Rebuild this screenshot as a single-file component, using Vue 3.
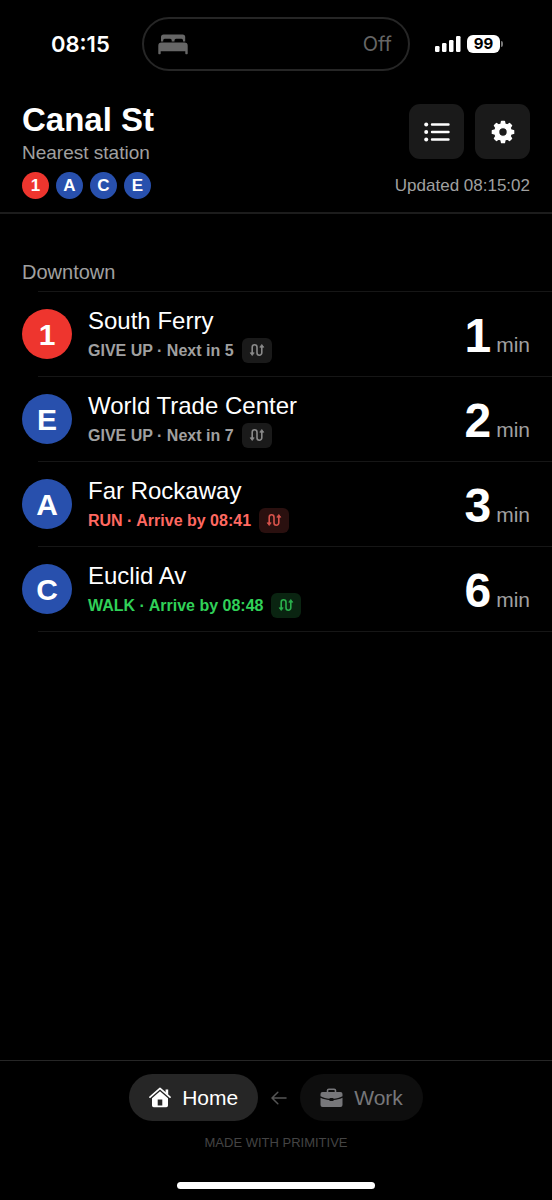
<template>
  <div class="app">
    <div class="status-bar">
      <span class="status-time">08:15</span>
      <div class="island">
        <svg class="bed-icon" viewBox="0 0 30 21" aria-hidden="true">
          <path d="M3 7.5V3a2.600 2.600 0 0 1 2.600-2.600h19A2.600 2.600 0 0 1 27.200 3v4.500h-2.200V6.200a1.500 1.500 0 0 0-1.500-1.500h-5.500a1.500 1.500 0 0 0-1.500 1.500v1.300h-2.800V6.200a1.500 1.500 0 0 0-1.500-1.500H6.700a1.500 1.500 0 0 0-1.500 1.500v1.300z" />
          <path d="M3.500 8.600h23a3.200 3.200 0 0 1 3.200 3.200V19.500a.7.7 0 0 1-.7.700h-1a.7.7 0 0 1-.7-.7v-2.200H2.700v2.200a.7.7 0 0 1-.7.700H1a.7.7 0 0 1-.7-.7v-7.700a3.200 3.200 0 0 1 3.200-3.200z" />
        </svg>
        <span>Off</span>
      </div>
      <div class="status-right">
        <svg class="signal-icon" viewBox="0 0 26 18" aria-hidden="true">
          <rect x="0" y="11" width="4.500" height="6" rx="1.200" />
          <rect x="7" y="8" width="4.500" height="9" rx="1.200" />
          <rect x="14" y="5" width="4.500" height="12" rx="1.200" />
          <rect x="21" y="1" width="4.500" height="16" rx="1.200" />
        </svg>
        <span class="battery">99</span>
        <span class="battery-tip"></span>
      </div>
    </div>

    <header class="header">
      <div>
        <h1 class="station">Canal St</h1>
        <p class="station-hint">Nearest station</p>
        <div class="lines">
          <span v-for="line in lines" :key="line" class="bullet small" :class="bulletColor(line)">{{ line }}</span>
        </div>
      </div>
      <div class="header-side">
        <div class="actions">
          <button class="icon-btn" type="button" aria-label="Stations">
            <svg width="26" height="20" viewBox="0 0 26 20" aria-hidden="true">
              <g fill="#fff">
                <circle cx="2.200" cy="2.500" r="2" />
                <circle cx="2.200" cy="10" r="2" />
                <circle cx="2.200" cy="17.500" r="2" />
              </g>
              <path d="M8 2.500h16.500M8 10h16.500M8 17.500h16.500" stroke="#fff" stroke-width="2.400" stroke-linecap="round" />
            </svg>
          </button>
          <button class="icon-btn" type="button" aria-label="Settings">
            <svg width="24" height="24" viewBox="-12 -12 24 24" aria-hidden="true">
              <path :d="gearPath" fill="#fff" fill-rule="evenodd" stroke="#fff" stroke-width="1.400" stroke-linejoin="round" />
            </svg>
          </button>
        </div>
        <span class="updated">Updated 08:15:02</span>
      </div>
    </header>

    <main class="board">
      <h2 class="direction">Downtown</h2>
      <ul class="trains">
        <li v-for="train in trains" :key="train.line" class="train">
          <span class="bullet" :class="bulletColor(train.line)">{{ train.line }}</span>
          <div class="info">
            <div class="dest">{{ train.dest }}</div>
            <div class="advice" :class="train.mood">
              <span>{{ train.advice }}</span>
              <button class="route-btn" type="button" :aria-label="'Route to ' + train.dest">
                <svg width="16" height="14" viewBox="0 0 16 14" aria-hidden="true">
                  <path
                    d="M3.200 10V4.200a2.400 2.400 0 0 1 4.800 0v5.600a2.400 2.400 0 0 0 4.800 0V4"
                    fill="none"
                    stroke="currentColor"
                    stroke-width="1.600"
                  />
                  <path
                    d="M1.200 9.800h4l-2 2.700zM10.800 4.200h4l-2-2.700z"
                    fill="currentColor"
                    stroke="currentColor"
                    stroke-width=".8"
                    stroke-linejoin="round"
                  />
                </svg>
              </button>
            </div>
          </div>
          <div class="eta">
            <span class="eta-num">{{ train.minutes }}</span>
            <span class="eta-unit">min</span>
          </div>
        </li>
      </ul>
    </main>

    <footer class="footer">
      <div class="places">
        <button class="place active" type="button">
          <svg width="22" height="21" viewBox="0 0 22 21" aria-hidden="true">
            <path d="M1 10.200L11 1.400l10 8.800" fill="none" stroke="currentColor" stroke-width="1.700" stroke-linecap="round" stroke-linejoin="round" />
            <path d="M16.600 2.600h2.600v5.200l-2.600-2.300z" fill="currentColor" />
            <path
              d="M11 4.300l8 7V18.500a1.700 1.700 0 0 1-1.700 1.700H4.700A1.700 1.700 0 0 1 3 18.500v-7.200zM8.700 12.400v6h4.600v-6z"
              fill="currentColor"
              fill-rule="evenodd"
            />
          </svg>
          <span>Home</span>
        </button>
        <svg class="arrow" width="16" height="14" viewBox="0 0 16 14" aria-hidden="true">
          <path d="M15 7H1.200M6.800 1.200L1 7l5.800 5.800" fill="none" stroke="currentColor" stroke-width="1.500" stroke-linecap="round" stroke-linejoin="round" />
        </svg>
        <button class="place" type="button">
          <svg width="23" height="20" viewBox="0 0 23 20" aria-hidden="true">
            <path d="M7.500 4.500V2.600A1.400 1.400 0 0 1 8.900 1.200h5.200a1.400 1.400 0 0 1 1.400 1.400v1.900" fill="none" stroke="currentColor" stroke-width="1.600" />
            <path d="M2.500 4h18a2 2 0 0 1 2 2v2.200c-3 1.500-6 2.200-8.700 2.500a1.500 1.500 0 0 0-1.300-.7h-2a1.500 1.500 0 0 0-1.300.7C6.500 10.400 3.500 9.700.5 8.200V6a2 2 0 0 1 2-2z" fill="currentColor" />
            <path d="M.5 9.700c3 1.400 6 2.100 8.600 2.300a1.500 1.500 0 0 0 1.400 1h2a1.500 1.500 0 0 0 1.400-1c2.600-.2 5.600-.9 8.600-2.300V17a2 2 0 0 1-2 2h-18a2 2 0 0 1-2-2z" fill="currentColor" />
          </svg>
          <span>Work</span>
        </button>
      </div>
      <p class="credit">MADE WITH PRIMITIVE</p>
      <div class="home-indicator"></div>
    </footer>
  </div>
</template>

<script setup>
const lines = ['1', 'A', 'C', 'E']

const trains = [
  { line: '1', dest: 'South Ferry', advice: 'GIVE UP · Next in 5', mood: 'missed', minutes: 1 },
  { line: 'E', dest: 'World Trade Center', advice: 'GIVE UP · Next in 7', mood: 'missed', minutes: 2 },
  { line: 'A', dest: 'Far Rockaway', advice: 'RUN · Arrive by 08:41', mood: 'run', minutes: 3 },
  { line: 'C', dest: 'Euclid Av', advice: 'WALK · Arrive by 08:48', mood: 'walk', minutes: 6 },
]

const bulletColor = (line) => (line === '1' ? 'red' : 'blue')

// eight-tooth gear with a round hole
const makeGear = (teeth, outer, inner, hole) => {
  const points = []
  const step = (Math.PI * 2) / teeth
  for (let i = 0; i < teeth; i++) {
    const mid = i * step
    const corners = [[-0.31, inner], [-0.17, outer], [0.17, outer], [0.31, inner]]
    for (const [k, r] of corners) {
      const a = mid + k * step
      points.push(`${(r * Math.sin(a)).toFixed(2)} ${(-r * Math.cos(a)).toFixed(2)}`)
    }
  }
  return `M${points.join('L')}ZM${-hole} 0a${hole} ${hole} 0 1 0 ${hole * 2} 0a${hole} ${hole} 0 1 0 ${-hole * 2} 0Z`
}

const gearPath = makeGear(8, 10.7, 8.2, 4.4)
</script>

<style>
body {
  margin: 0;
  background: #000;
}
</style>

<style scoped>
.app {
  min-height: 100vh;
  display: flex;
  flex-direction: column;
  background: #000;
  color: #fff;
  font-family: "Liberation Sans", Helvetica, Arial, sans-serif;
}

h1,
h2,
p,
ul {
  margin: 0;
  padding: 0;
}

button {
  border: 0;
  padding: 0;
  font: inherit;
  color: inherit;
  cursor: pointer;
}

.status-bar {
  display: grid;
  grid-template-columns: 1fr 268px 1fr;
  align-items: center;
  padding-top: 17px;
  font-family: Inter, sans-serif;
}

.status-time {
  padding-left: 51px;
  font-size: 22px;
  font-weight: 600;
}

.island {
  display: flex;
  align-items: center;
  justify-content: space-between;
  box-sizing: border-box;
  height: 54px;
  padding: 0 16px 0 14px;
  border: 2px solid #262626;
  border-radius: 27px;
  color: #666;
  font-size: 20px;
}

.bed-icon {
  width: 30px;
  height: 21px;
  fill: #666;
}

.status-right {
  display: flex;
  align-items: center;
  padding-left: 25px;
}

.signal-icon {
  width: 26px;
  height: 18px;
  fill: #fff;
}

.battery {
  width: 33px;
  margin-left: 6px;
  border-radius: 6px;
  background: #fff;
  color: #000;
  font-size: 15px;
  font-weight: 700;
  line-height: 18px;
  text-align: center;
}

.battery-tip {
  width: 2px;
  height: 6px;
  margin-left: 1px;
  border-radius: 0 2px 2px 0;
  background: #777;
}

.header {
  display: flex;
  justify-content: space-between;
  padding: 30px 22px 13px;
  border-bottom: 2px solid #1c1c1c;
}

.station {
  font-size: 33px;
  font-weight: 700;
  line-height: 38px;
}

.station-hint {
  color: #a0a0a0;
  font-size: 19px;
  line-height: 28px;
}

.lines {
  display: flex;
  gap: 7px;
  margin-top: 5px;
}

.bullet {
  flex: none;
  width: 50px;
  height: 50px;
  border-radius: 50%;
  font-size: 30px;
  font-weight: 700;
  line-height: 52px;
  text-align: center;
}

.bullet.small {
  width: 27px;
  height: 27px;
  font-size: 17px;
  line-height: 28px;
}

.red {
  background: #ee352e;
}

.blue {
  background: #2850ad;
}

.header-side {
  display: flex;
  flex-direction: column;
  align-items: flex-end;
  justify-content: space-between;
  padding-top: 3px;
}

.actions {
  display: flex;
  gap: 11px;
}

.icon-btn {
  display: flex;
  align-items: center;
  justify-content: center;
  width: 55px;
  height: 55px;
  border-radius: 11px;
  background: #1a1a1a;
}

.updated {
  color: #a0a0a0;
  font-size: 17px;
  line-height: 27px;
}

.board {
  flex: 1;
  padding-top: 46px;
}

.direction {
  padding-left: 22px;
  color: #a0a0a0;
  font-size: 20px;
  font-weight: 400;
  line-height: 24px;
}

.trains {
  margin: 7px 0 0 38px;
  border-top: 1px solid #161616;
  list-style: none;
}

.train {
  display: flex;
  align-items: center;
  gap: 16px;
  height: 84px;
  padding-right: 22px;
  border-bottom: 1px solid #161616;
}

.train .bullet {
  margin-left: -16px;
}

.info {
  flex: 1;
  min-width: 0;
}

.dest {
  font-size: 24px;
  line-height: 30px;
}

.advice {
  display: flex;
  align-items: center;
  gap: 8px;
  margin-top: 2px;
  font-size: 16px;
  font-weight: 700;
  line-height: 25px;
}

.route-btn {
  display: flex;
  align-items: center;
  justify-content: center;
  width: 30px;
  height: 25px;
  border-radius: 6px;
}

.missed {
  color: #a0a0a0;
}

.missed .route-btn {
  background: #1a1a1a;
  color: #8a8a8a;
}

.run {
  color: #ff6961;
}

.run .route-btn {
  background: #2a100f;
  color: #d9534c;
}

.walk {
  color: #30d158;
}

.walk .route-btn {
  background: #0a2411;
  color: #2ab04c;
}

.eta {
  display: flex;
  align-items: baseline;
  gap: 5px;
  padding-top: 2px;
}

.eta-num {
  font-size: 48px;
  font-weight: 700;
}

.eta-unit {
  color: #a0a0a0;
  font-size: 21px;
}

.footer {
  display: flex;
  flex-direction: column;
  align-items: center;
  padding: 13px 22px 11px;
  border-top: 1px solid #262626;
}

.places {
  display: flex;
  align-items: center;
  gap: 13px;
}

.place {
  display: flex;
  align-items: center;
  gap: 11px;
  height: 47px;
  padding: 0 20px;
  border-radius: 24px;
  background: #0e0e0e;
  color: #77777a;
  font-size: 21px;
}

.place.active {
  background: #262626;
  color: #fff;
}

.arrow {
  color: #555;
}

.credit {
  margin-top: 14px;
  color: #444;
  font-size: 13px;
  line-height: 16px;
}

.home-indicator {
  width: 198px;
  height: 7px;
  margin-top: 31px;
  border-radius: 4px;
  background: #fff;
}
</style>
